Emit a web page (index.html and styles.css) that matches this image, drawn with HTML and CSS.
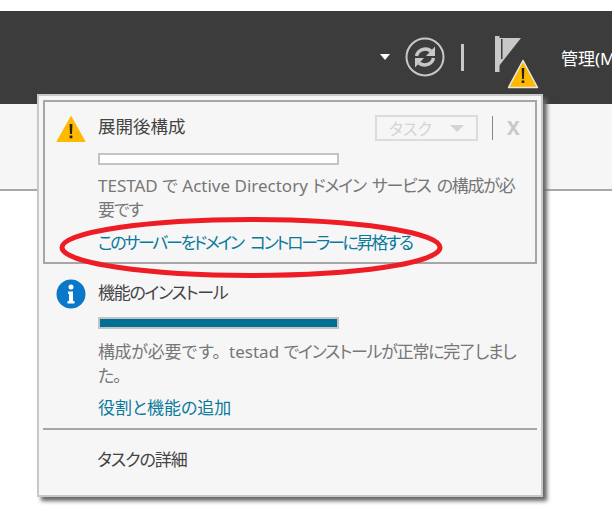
FILE: index.html
```html
<!DOCTYPE html>
<html lang="ja">
<head>
    <meta charset="UTF-8">
    <title>サーバー マネージャー</title>
    <link rel="stylesheet" href="styles.css">
</head>
<body>
    <div class="topbar">
        <span class="caret"></span>
        <svg class="sync" width="40" height="40" viewBox="0 0 40 40">
            <circle cx="20" cy="20" r="18.500" fill="none" stroke="#c8c8c8" stroke-width="2"/>
            <g>
                <path d="M11.500 19A9 8.500 0 0 1 26 14" fill="none" stroke="#c8c8c8" stroke-width="3.500"/>
                <path d="M30 9.500V19H21z" fill="#c8c8c8"/>
            </g>
            <g transform="rotate(180 20 20)">
                <path d="M11.500 19A9 8.500 0 0 1 26 14" fill="none" stroke="#c8c8c8" stroke-width="3.500"/>
                <path d="M30 9.500V19H21z" fill="#c8c8c8"/>
            </g>
        </svg>
        <span class="divider"></span>
        <svg class="flag" width="48" height="56" viewBox="0 0 48 56">
            <path d="M3 0h4.500v36H3z" fill="#c8c8c8"/>
            <path d="M7 2h22L7 30z" fill="#c8c8c8"/>
            <path d="M9 3h1.500v20H9z" fill="#3c3c3c"/>
            <path d="M31 24.500L45.500 51.500H16.500z" fill="#ffb900" stroke="#e8e8e8" stroke-width="1.500" stroke-linejoin="round"/>
            <path d="M29.700 32h2.600l-.4 11h-1.800zM29.700 44.500h2.600v2.600h-2.600z" fill="#222"/>
        </svg>
        <span class="manage">管理(M)</span>
    </div>
    <div class="subbar"></div>

    <div class="popup">
        <div class="task selected">
            <svg class="task-icon" width="30" height="28" viewBox="0 0 30 28">
                <path d="M15 1.500L29 26.500H1z" fill="#ffb900" stroke="#ffb900" stroke-linejoin="round"/>
                <path d="M13.600 9h2.800l-.4 10h-2zM13.600 20.500h2.800v2.800h-2.800z" fill="#222"/>
            </svg>
            <div class="task-body">
                <div class="task-head">
                    <span class="task-title">展開後構成</span>
                    <span class="task-button">タスク<i></i></span>
                    <span class="task-sep"></span>
                    <span class="task-close">X</span>
                </div>
                <div class="progress"></div>
                <p class="task-desc">TESTAD で Active Directory <span class="kana">ドメイン サービス の構成が必<br>要です</span></p>
                <a class="task-link promote">このサーバーをドメイン コントローラーに昇格する</a>
            </div>
        </div>
        <div class="task">
            <svg class="task-icon" width="30" height="30" viewBox="0 0 30 30">
                <circle cx="15" cy="15" r="14.500" fill="#0a78c8"/>
                <circle cx="15" cy="8" r="2.500" fill="#fff"/>
                <path d="M12 12.500h5V22h1.500v2.500h-7V22H13v-7h-1z" fill="#fff"/>
            </svg>
            <div class="task-body">
                <div class="task-head">
                    <span class="task-title kana-title">機能のインストール</span>
                </div>
                <div class="progress full"></div>
                <p class="task-desc"><span class="wide">構成が必要です。</span>testad <span class="kana">でインストールが正常に完了しまし<br>た。</span></p>
                <a class="task-link">役割と機能の追加</a>
            </div>
        </div>
        <div class="details">タスクの詳細</div>
    </div>

    <svg class="circle-mark" width="612" height="506" viewBox="0 0 612 506">
        <ellipse cx="251" cy="247.500" rx="189" ry="28" fill="none" stroke="#ee1c25" stroke-width="5"/>
    </svg>
</body>
</html>
```
FILE: styles.css
```css
html, body {
    margin: 0;
    height: 100%;
}

body {
    position: relative;
    overflow: hidden;
    background: #fff;
    font-family: "Noto Sans", "Noto Sans CJK JP", sans-serif;
    font-feature-settings: "palt";
    font-size: 17px;
    color: #444;
}

.topbar {
    display: flex;
    align-items: center;
    height: 93px;
    margin-top: 11px;
    padding-left: 380px;
    background: #3c3c3c;
    box-sizing: border-box;
    white-space: nowrap;
    overflow: hidden;
}

.topbar > * {
    flex: none;
}

.caret {
    width: 0;
    height: 0;
    border-left: 5px solid transparent;
    border-right: 5px solid transparent;
    border-top: 6px solid #fff;
    margin-top: -1px;
}

.sync {
    margin-left: 15px;
    margin-top: -1px;
}

.divider {
    width: 3px;
    height: 27px;
    margin-left: 16px;
    margin-top: -1px;
    background: #c8c8c8;
}

.flag {
    align-self: flex-start;
    margin-left: 28px;
    margin-top: 25px;
}

.manage {
    margin-left: 21px;
    margin-top: -1px;
    color: #fff;
}

.subbar {
    height: 85px;
    background: #f6f6f6;
    border-bottom: 2px solid #a8a8a8;
}

.popup {
    position: absolute;
    left: 37px;
    top: 94px;
    width: 506px;
    height: 403px;
    box-sizing: border-box;
    padding: 4px;
    background: #f6f6f6;
    border: 2px solid #c8c8c8;
    box-shadow: 4px 4px 4px #666;
}

.task {
    display: flex;
    height: 164px;
    box-sizing: border-box;
    padding: 13px 0 0 11px;
    border: 2px solid #a6a6a6;
}

.task + .task {
    height: 166px;
    padding: 15px 0 0 13px;
    border: 0;
    border-bottom: 2px solid #a6a6a6;
}

.task-icon {
    flex: none;
}

.task-body {
    margin-left: 12px;
    flex: 1;
}

.task-head {
    display: flex;
    align-items: center;
    height: 26px;
}

.task-title {
    flex: 1;
    align-self: flex-start;
    margin-top: 1px;
    line-height: 20px;
    font-size: 17.500px;
}

.task-title.kana-title {
    margin-top: 4px;
    font-size: 17px;
    letter-spacing: -1.300px;
}

.task-button {
    display: flex;
    align-items: center;
    justify-content: space-between;
    width: 103px;
    height: 26px;
    box-sizing: border-box;
    padding: 0 12px;
    border: 2px solid #dcdcdc;
    font-size: 16px;
    color: #d4d4d4;
}

.task-button i {
    width: 0;
    height: 0;
    border-left: 7px solid transparent;
    border-right: 7px solid transparent;
    border-top: 7px solid #d4d4d4;
}

.task-sep {
    width: 1px;
    height: 24px;
    margin-left: 14px;
    background: #888;
}

.task-close {
    width: 13px;
    margin: 0 15px 0 14px;
    font-weight: 700;
    font-size: 19px;
    color: #c8c8c8;
}

.progress {
    width: 241px;
    height: 12px;
    margin-top: 12px;
    box-sizing: border-box;
    background: #fff;
    border: 2px solid #c4c4c4;
}

.progress.full {
    background: #006f94;
}

.task-desc {
    margin: 9px 0 0;
    line-height: 24px;
    white-space: nowrap;
    color: #777;
}

.task + .task .task-desc {
    margin-top: 11px;
}

.kana {
    letter-spacing: -1.250px;
    word-spacing: 3px;
}

.wide {
    font-feature-settings: normal;
    letter-spacing: -.400px;
}

.task-link {
    display: block;
    margin-top: 9px;
    line-height: 24px;
    color: #0a7a9c;
}

.task + .task .task-link {
    margin-top: 8px;
}

.task-link.promote {
    letter-spacing: -2.350px;
    word-spacing: 5px;
}

.details {
    padding: 18px 0 0 54px;
    line-height: 24px;
    letter-spacing: -1px;
    color: #444;
}

.circle-mark {
    position: absolute;
    left: 0;
    top: 0;
    pointer-events: none;
}
```
